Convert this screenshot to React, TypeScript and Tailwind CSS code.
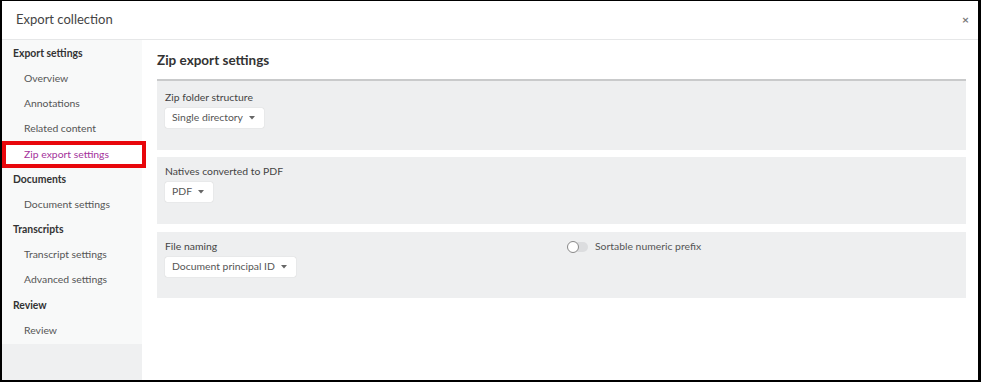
import React from "react";

const font = { fontFamily: "Lato, 'Open Sans', sans-serif" };

function Caret() {
  return (
    <svg width="6" height="4" viewBox="0 0 6 4" className="ml-[6px]">
      <path d="M0 0 L6 0 L3 3.5 Z" fill="#666" />
    </svg>
  );
}

function Dropdown({ label }: { label: string }) {
  return (
    <div className="flex h-[20px] w-fit items-center rounded-[2px] bg-white pl-[7px] pr-[9px] text-[10.4px] text-[#555] shadow-[0_0_1px_rgba(0,0,0,0.25)]">
      <span>{label}</span>
      <Caret />
    </div>
  );
}

type Item = { label: string; kind: "head" | "item" | "active" };

const items: Item[] = [
  { label: "Export settings", kind: "head" },
  { label: "Overview", kind: "item" },
  { label: "Annotations", kind: "item" },
  { label: "Related content", kind: "item" },
  { label: "Zip export settings", kind: "active" },
  { label: "Documents", kind: "head" },
  { label: "Document settings", kind: "item" },
  { label: "Transcripts", kind: "head" },
  { label: "Transcript settings", kind: "item" },
  { label: "Advanced settings", kind: "item" },
  { label: "Review", kind: "head" },
  { label: "Review", kind: "item" },
];

export default function App() {
  return (
    <div className="h-[384px] w-[981px] bg-white" style={font}>
      <div className="flex h-[382px] w-[981px] flex-col border-l-2 border-r-[3px] border-t border-b-2 border-black bg-white">
        <div className="flex h-[39px] shrink-0 items-center justify-between border-b border-[#e6e7e8] pl-[14px] pr-[9px]">
          <span className="text-[13px] text-[#444]">Export collection</span>
          <span className="text-[12px] font-bold text-[#777]">×</span>
        </div>
        <div className="flex min-h-0 flex-1">
          <div className="flex w-[140px] shrink-0 flex-col bg-[#eff0f1]">
            <div className="bg-[#f8f9f9] pt-[1px] pb-[1px]">
              {items.map((it, i) => (
                <div
                  key={i}
                  className={
                    "relative flex h-[25.2px] items-center text-[10.4px] " +
                    (it.kind === "head"
                      ? "pl-[11px] font-bold text-[#333]"
                      : it.kind === "active"
                      ? "bg-white pl-[22px] text-[#a4329c]"
                      : "pl-[22px] text-[#555]")
                  }
                >
                  {it.label}
                  {it.kind === "active" && (
                    <div className="pointer-events-none absolute left-[0px] right-[-4px] top-[-1px] bottom-[-1px] border-4 border-[#e8060b]" />
                  )}
                </div>
              ))}
            </div>
          </div>
          <div className="flex-1 bg-white pl-[15px] pr-[12px]">
            <div className="flex h-[41px] items-center border-b-2 border-[#c9cacb] pt-[2px]">
              <span className="text-[13.5px] font-bold text-[#333]">Zip export settings</span>
            </div>
            <div className="flex flex-col">
              <div className="h-[69px] bg-[#eeeff0] pl-[8px] pt-[10px]">
                <div className="mb-[4px] text-[10.4px] leading-[13px] text-[#444]">Zip folder structure</div>
                <Dropdown label="Single directory" />
              </div>
              <div className="mt-[7px] h-[67px] bg-[#eeeff0] pl-[8px] pt-[8px]">
                <div className="mb-[4px] text-[10.4px] leading-[13px] text-[#444]">Natives converted to PDF</div>
                <Dropdown label="PDF" />
              </div>
              <div className="mt-[8px] flex h-[66px] bg-[#eeeff0] pl-[8px] pt-[8px]">
                <div className="w-[403px]">
                  <div className="mb-[4px] text-[10.4px] leading-[13px] text-[#444]">File naming</div>
                  <Dropdown label="Document principal ID" />
                </div>
                <div className="flex h-[13px] items-center">
                  <div className="relative h-[10px] w-[20px] rounded-full bg-[#dcdddf]">
                    <div className="absolute left-[-1px] top-[-1px] h-[12px] w-[12px] rounded-full border border-[#888] bg-white" />
                  </div>
                  <span className="ml-[7px] text-[10.4px] text-[#555]">Sortable numeric prefix</span>
                </div>
              </div>
            </div>
          </div>
        </div>
      </div>
    </div>
  );
}
